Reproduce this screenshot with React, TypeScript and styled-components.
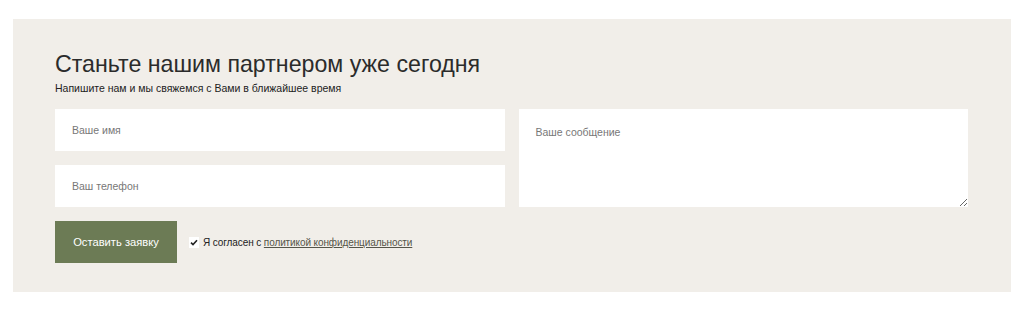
import { FC } from 'react';
import styled, { createGlobalStyle } from 'styled-components';

const GlobalStyle = createGlobalStyle`
  html, body {
    margin: 0;
    padding: 0;
    background: #ffffff;
  }
  body {
    font-family: 'Liberation Sans', Arial, sans-serif;
  }
`;

const Page = styled.div`
  padding: 19px 13px 18px 13px;
`;

const Panel = styled.section`
  background: #f1eee9;
  padding: 31px 43px 29px 42px;
`;

const Title = styled.h2`
  margin: 0;
  font-size: 23.2px;
  font-weight: 400;
  line-height: 28px;
  color: #2b2b2b;
`;

const Subtitle = styled.p`
  margin: 3px 0 0;
  font-size: 10.5px;
  line-height: 14px;
  color: #222222;
`;

const FormGrid = styled.form`
  margin-top: 14px;
  display: grid;
  grid-template-columns: 1fr 1fr;
  grid-template-rows: 42px 42px auto;
  column-gap: 14px;
  row-gap: 14px;
`;

const TextInput = styled.input`
  box-sizing: border-box;
  width: 100%;
  height: 42px;
  border: none;
  outline: none;
  background: #ffffff;
  padding: 0 17px;
  font-family: 'Liberation Sans', Arial, sans-serif;
  font-size: 10.5px;
  color: #333;

  &::placeholder {
    color: #777777;
  }
`;

const MessageArea = styled.textarea`
  box-sizing: border-box;
  grid-column: 2;
  grid-row: 1 / span 2;
  width: 100%;
  height: 100%;
  border: none;
  outline: none;
  background: #ffffff;
  padding: 17px 17px;
  font-family: 'Liberation Sans', Arial, sans-serif;
  font-size: 10.5px;
  color: #333;
  resize: vertical;

  &::placeholder {
    color: #777777;
  }
`;

const Actions = styled.div`
  grid-column: 1 / span 2;
  display: flex;
  align-items: center;
  gap: 12px;
`;

const SubmitButton = styled.button`
  width: 122px;
  height: 42px;
  padding: 0;
  border: none;
  background: #6c7b55;
  color: #ffffff;
  font-family: 'Liberation Sans', Arial, sans-serif;
  font-size: 11.2px;
  cursor: pointer;
`;

const Consent = styled.label`
  display: flex;
  align-items: center;
  gap: 4px;
  font-size: 10px;
  font-weight: 400;
  letter-spacing: -0.1px;
  color: #222222;
`;

const CheckBox = styled.span`
  width: 10px;
  height: 11px;
  background: #ffffff;
  display: inline-flex;
  align-items: center;
  justify-content: center;
`;

const PolicyLink = styled.a`
  color: #55554a;
  text-decoration: underline;
`;

const App: FC = () => (
  <>
    <GlobalStyle />
    <Page>
      <Panel>
        <Title>Станьте нашим партнером уже сегодня</Title>
        <Subtitle>Напишите нам и мы свяжемся с Вами в ближайшее время</Subtitle>
        <FormGrid onSubmit={(e) => e.preventDefault()}>
          <TextInput placeholder="Ваше имя" />
          <MessageArea placeholder="Ваше сообщение" />
          <TextInput placeholder="Ваш телефон" />
          <Actions>
            <SubmitButton type="submit">Оставить заявку</SubmitButton>
            <Consent>
              <CheckBox>
                <svg width="8" height="7" viewBox="0 0 8 7">
                  <path d="M1 3.6 L3 5.6 L7 1.2" stroke="#222" strokeWidth="1.6" fill="none" />
                </svg>
              </CheckBox>
              <span>
                Я согласен с <PolicyLink href="#">политикой конфиденциальности</PolicyLink>
              </span>
            </Consent>
          </Actions>
        </FormGrid>
      </Panel>
    </Page>
  </>
);

export default App;
